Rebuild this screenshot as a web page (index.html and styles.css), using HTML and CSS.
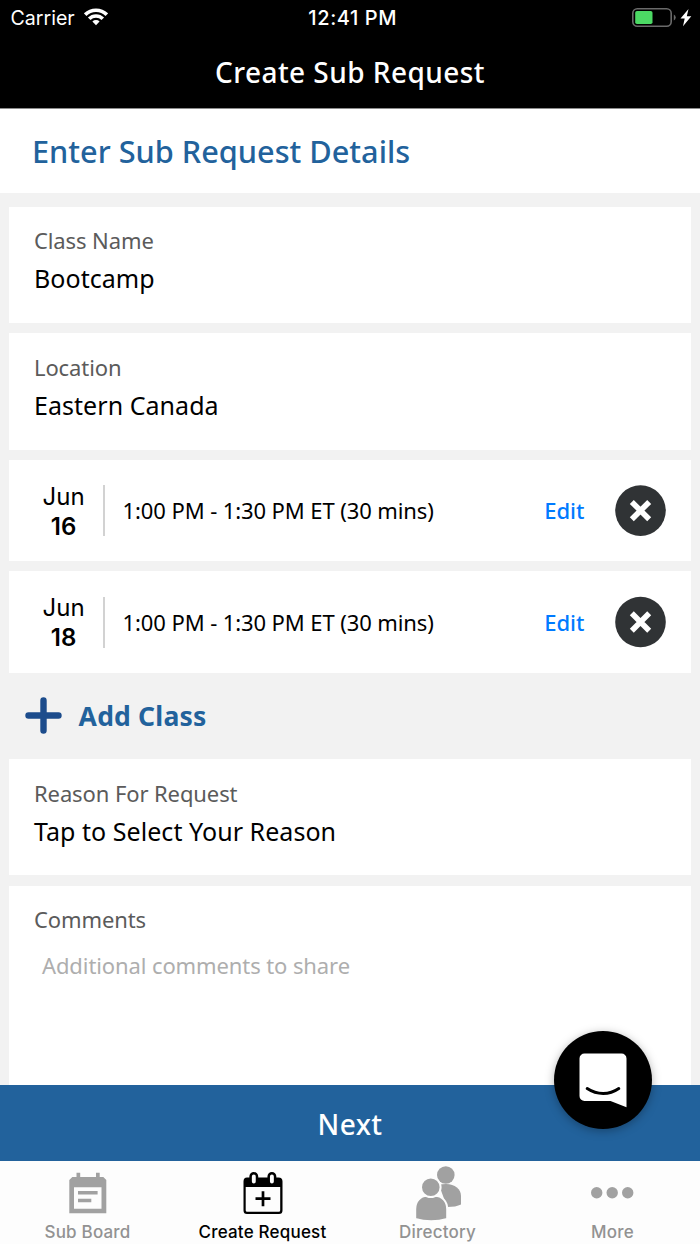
FILE: index.html
```html
<!DOCTYPE html>
<html lang="en">
<head>
<meta charset="utf-8">
<title>Create Sub Request</title>
<link rel="stylesheet" href="styles.css">
</head>
<body>
<div class="app">
  <header class="top">
    <div class="status">
      <div class="status-left"><span class="carrier">Carrier</span>
        <svg class="wifi" width="24" height="18" viewBox="0 0 24 18"><g fill="none" stroke="#fff" stroke-width="3.6"><path d="M1.2 6.700a15.200 15.200 0 0 1 21.600 0"/><path d="M5.200 10.800a9.600 9.600 0 0 1 13.600 0"/></g><path d="M12 17.200L8.400 13.500a5.200 5.200 0 0 1 7.200 0z" fill="#fff"/></svg>
      </div>
      <span class="clock">12:41 PM</span>
      <div class="status-right">
        <svg width="60" height="20" viewBox="0 0 60 20"><rect x=".8" y=".8" width="38.4" height="17.4" rx="4.5" fill="none" stroke="#6a6a6a" stroke-width="1.6"/><rect x="3.2" y="3" width="17.3" height="13" rx="1.8" fill="#4cd964"/><path d="M41.8 6.5a3.3 3.3 0 0 1 0 6z" fill="#6a6a6a"/><path d="M56.500 1L48.500 10.500h4.200L51 18.200l8.300-10h-4.500z" fill="#fff"/></svg>
      </div>
    </div>
    <h1 class="title">Create Sub Request</h1>
  </header>
  <h2 class="heading">Enter Sub Request Details</h2>
  <main class="form">
    <section class="card field"><div class="label">Class Name</div><div class="value">Bootcamp</div></section>
    <section class="card field"><div class="label">Location</div><div class="value">Eastern Canada</div></section>
    <section class="card slot">
      <div class="date"><span>Jun</span><b>16</b></div>
      <div class="time">1:00 PM - 1:30 PM ET (30 mins)</div>
      <a class="edit">Edit</a>
      <svg class="remove" width="52" height="52" viewBox="0 0 52 52"><circle cx="26.5" cy="25.6" r="25.3" fill="#303335"/><path d="M17.800 16.900l17.400 17.400M35.200 16.900L17.800 34.300" stroke="#fff" stroke-width="5.6"/></svg>
    </section>
    <section class="card slot">
      <div class="date"><span>Jun</span><b>18</b></div>
      <div class="time">1:00 PM - 1:30 PM ET (30 mins)</div>
      <a class="edit">Edit</a>
      <svg class="remove" width="52" height="52" viewBox="0 0 52 52"><circle cx="26.5" cy="26" r="25.3" fill="#303335"/><path d="M17.800 17.300l17.400 17.400M35.200 17.300L17.800 34.700" stroke="#fff" stroke-width="5.6"/></svg>
    </section>
    <div class="add"><svg width="38" height="38" viewBox="0 0 38 38"><path d="M3.500 18.500h30M18.500 3.500v30" stroke="#1c4c8c" stroke-width="6.4" stroke-linecap="round"/></svg><span>Add Class</span></div>
    <section class="card field"><div class="label">Reason For Request</div><div class="value">Tap to Select Your Reason</div></section>
    <section class="card field comments"><div class="label">Comments</div><div class="hint">Additional comments to share</div></section>
  </main>
  <div class="next">Next
    <svg class="chat" width="120" height="120" viewBox="0 0 120 120"><circle cx="60" cy="60" r="49"/><path d="M41.500 33.500h37a5 5 0 0 1 5 5v48.700l-16-6.200h-26a5 5 0 0 1-5-5v-37.500a5 5 0 0 1 5-5z" fill="#fff"/><path d="M44.200 68.500c10 6.600 22 6.600 31.600 0" fill="none" stroke="#000" stroke-width="3" stroke-linecap="round"/></svg>
  </div>
  <nav class="tabs">
    <a class="tab"><svg width="48" height="56" viewBox="0 0 48 56"><path fill="#a1a1a1" fill-rule="evenodd" d="M12.500 8.800h3.700V13h15.800V8.800h3.700V13h3.600l3 3v33.300h-37V16l3-3h4.200zM10 23.300v21.500h27.500V23.300zM14 27h19.600v3.500H14zM14 34.800h13.300v3.500H14z"/></svg><span>Sub Board</span></a>
    <a class="tab active"><svg width="48" height="56" viewBox="0 0 48 56"><path fill="#000" fill-rule="evenodd" d="M8 13.500h31.500q4 0 4 4v29q0 3.500-3.500 3.500H8q-3.500 0-3.500-3.500v-29q0-4 3.500-4zM6.700 23v23.300q0 1.500 1.500 1.500h31.500q1.500 0 1.500-1.500V23z"/><g fill="#fdfdfd" stroke="#000" stroke-width="2.500"><rect x="11.600" y="9.200" width="6.400" height="11.600" rx="3.200"/><rect x="29.700" y="9.200" width="6.400" height="11.600" rx="3.200"/></g><path d="M24 27.200v15M16.500 34.700h15" stroke="#000" stroke-width="2.700"/></svg><span>Create Request</span></a>
    <a class="tab"><svg width="48" height="56" viewBox="0 0 48 56"><g fill="#a1a1a1"><circle cx="31.800" cy="11" r="8.800"/><path d="M25 20.700q3-.7 7-.7c9 0 15 5 15 12v8.500q-5 2.500-14 2.500z"/></g><g fill="#a1a1a1" stroke="#fdfdfd" stroke-width="2"><path d="M1.200 54.900V45c0-7.500 5-13.200 12-13.200h7.500c7.500 0 12.500 5.700 12.500 13.200v9.900q-16 4.500-32 0z"/><circle cx="16.800" cy="23.300" r="9.800"/></g></svg><span>Directory</span></a>
    <a class="tab"><svg width="48" height="56" viewBox="0 0 48 56" fill="#a1a1a1"><circle cx="7.700" cy="28.700" r="5.700"/><circle cx="23.200" cy="28.700" r="5.700"/><circle cx="38.700" cy="28.700" r="5.700"/></svg><span>More</span></a>
  </nav>
</div>
</body>
</html>
```
FILE: styles.css
```css
* { box-sizing: border-box; }
body { margin: 0; background: #f2f2f2; font-family: "Noto Sans", sans-serif; color: #000; }
.app { width: 700px; height: 1244px; display: flex; flex-direction: column; overflow: hidden; }
.top { height: 108px; flex: none; background: #000; color: #fff; }
.status { height: 36px; display: grid; grid-template-columns: 1fr auto 1fr; align-items: center; padding: 0 8px 0 10.500px; font: 400 19.600px/36px Inter, sans-serif; }
.status-left { display: flex; align-items: center; gap: 9px; }
.wifi { display: block; margin-top: -3px; }
.clock { font-size: 20px; font-weight: 500; letter-spacing: .6px; margin-left: 3px; }
.status-right { display: flex; justify-content: flex-end; margin-top: -1px; }
.title { margin: 0; text-align: center; font-size: 28px; font-weight: 500; line-height: 72px; letter-spacing: .45px; }
.heading { margin: 0; height: 85px; flex: none; padding-left: 32px; background: #fff; border-top: 1px solid #8c8c8c; color: #22629c; font-size: 30.700px; font-weight: 500; line-height: 84px; }
.form { flex: 1; min-height: 0; overflow: hidden; padding: 13.500px 8.600px 0; display: flex; flex-direction: column; }
.card { background: #fff; flex: none; margin-bottom: 10.200px; }
.field { height: 116.500px; padding: 16.800px 25.400px; }
.field:first-child { padding-top: 16.300px; }
.label { font-size: 22px; line-height: 34px; color: #5b5b5b; letter-spacing: -.1px; }
.value { font-size: 25px; line-height: 42px; letter-spacing: .05px; }
.slot { height: 101.300px; display: flex; align-items: center; padding: 0 25px; }
.date { width: 71px; height: 51px; border-right: 2px solid #d2d2d2; padding: 2px 9px 0 0; display: flex; flex-direction: column; align-items: center; justify-content: center; font: 400 24px/30px Inter, sans-serif; }
.date b { font-weight: 600; }
.time { flex: 1; padding-left: 18px; font-size: 22px; line-height: 36px; letter-spacing: -.1px; white-space: nowrap; margin-top: -1px; }
.edit { color: #007aff; font-size: 22px; font-weight: 500; margin: -1px 30px 0 0; }
.remove { flex: none; }
.add { height: 76px; flex: none; display: flex; align-items: center; gap: 16px; padding: 0 0 10px 16px; color: #22629c; font-size: 26.500px; font-weight: 700; letter-spacing: .2px; }
.comments { height: 210px; padding-top: 16.300px; }
.hint { padding-left: 8px; padding-top: 8px; color: #aeaeae; font-size: 22px; line-height: 42px; letter-spacing: -.1px; }
.next { height: 76px; flex: none; background: #22629c; color: #fff; font-size: 28px; font-weight: 500; line-height: 78px; letter-spacing: .4px; text-align: center; position: relative; }
.chat { position: absolute; left: 543.400px; top: -65px; filter: drop-shadow(0 2px 5px rgba(0,0,0,.3)); }
.tabs { height: 83px; flex: none; background: #fdfdfd; display: flex; }
.tab { flex: 1; display: flex; flex-direction: column; align-items: center; color: #929292; font: 500 17px/28px Inter, sans-serif; padding-top: 3px; }
.tab svg { flex: none; overflow: visible; height: 56px; }
.tab span { margin-top: -2px; letter-spacing: .2px; }
.active { color: #000; }
```
